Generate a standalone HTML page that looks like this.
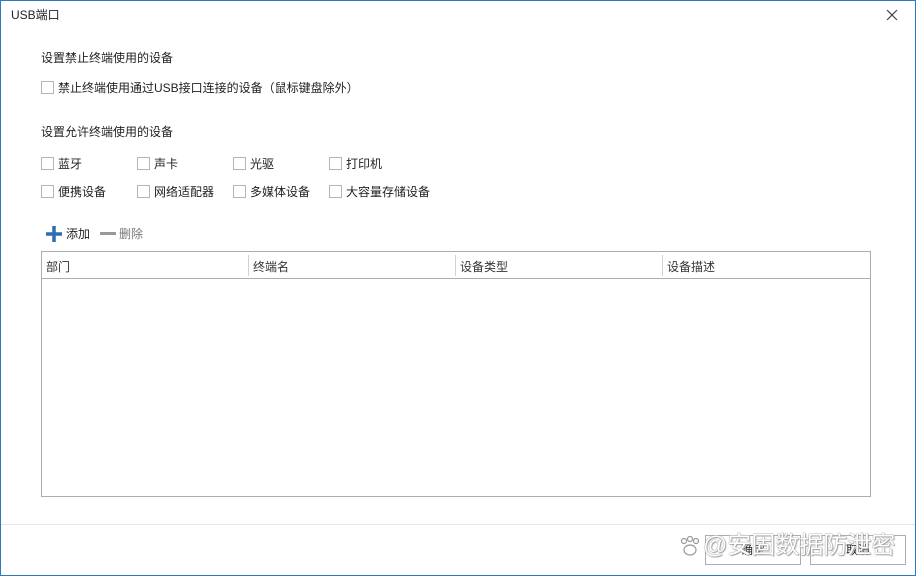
<!DOCTYPE html>
<html><head><meta charset="utf-8"><style>
*{margin:0;padding:0;box-sizing:border-box}
body{width:916px;height:576px;background:#fff;font-family:"Liberation Sans","Noto Sans CJK SC",sans-serif;font-size:12px;color:#222;position:relative;overflow:hidden}
.frame{position:absolute;inset:0;border:1px solid #2b79c2}
.a{position:absolute;white-space:nowrap;line-height:14px}
.cb{position:absolute;width:13px;height:13px;border:1px solid #b5b5b5;background:#fff}
.tbl{position:absolute;left:41px;top:251px;width:830px;height:246px;border:1px solid #adadad}
.hd{position:absolute;left:0;top:0;right:0;height:27px;border-bottom:1px solid #adadad}
.hd span{position:absolute;top:6px;color:#333}
.hd i{position:absolute;top:3px;width:1px;height:21px;background:#d0d0d0}
.btn{position:absolute;top:535px;width:96px;height:30px;border:1px solid #adadad;background:#fff;text-align:center;line-height:28px}
</style></head><body>
<div class="frame"></div>
<div class="a" style="left:11px;top:8px">USB端口</div>
<svg style="position:absolute;left:886px;top:9px" width="12" height="12"><path d="M1 1L11 11M11 1L1 11" stroke="#444" stroke-width="1.2"/></svg>
<div class="a" style="left:41px;top:51px">设置禁止终端使用的设备</div>
<div class="cb" style="left:41px;top:81px"></div><div class="a" style="left:58px;top:81px">禁止终端使用通过USB接口连接的设备（鼠标键盘除外）</div>
<div class="a" style="left:41px;top:125px">设置允许终端使用的设备</div>
<div class="cb" style="left:41px;top:157px"></div><div class="a" style="left:58px;top:157px">蓝牙</div>
<div class="cb" style="left:137px;top:157px"></div><div class="a" style="left:154px;top:157px">声卡</div>
<div class="cb" style="left:233px;top:157px"></div><div class="a" style="left:250px;top:157px">光驱</div>
<div class="cb" style="left:329px;top:157px"></div><div class="a" style="left:346px;top:157px">打印机</div>
<div class="cb" style="left:41px;top:185px"></div><div class="a" style="left:58px;top:185px">便携设备</div>
<div class="cb" style="left:137px;top:185px"></div><div class="a" style="left:154px;top:185px">网络适配器</div>
<div class="cb" style="left:233px;top:185px"></div><div class="a" style="left:250px;top:185px">多媒体设备</div>
<div class="cb" style="left:329px;top:185px"></div><div class="a" style="left:346px;top:185px">大容量存储设备</div>
<svg style="position:absolute;left:46px;top:226px" width="16" height="16"><path d="M0 8H16M8 0V16" stroke="#2d6db4" stroke-width="3.5"/></svg>
<div class="a" style="left:66px;top:227px">添加</div>
<div style="position:absolute;left:100px;top:232px;width:16px;height:3px;background:#999"></div>
<div class="a" style="left:119px;top:227px;color:#777">删除</div>
<div class="tbl"><div class="hd">
<span style="left:4px">部门</span><i style="left:206px"></i>
<span style="left:211px">终端名</span><i style="left:413px"></i>
<span style="left:418px">设备类型</span><i style="left:620px"></i>
<span style="left:625px">设备描述</span>
</div></div>
<div style="position:absolute;left:1px;right:1px;top:524px;height:1px;background:#e6e6e6"></div>
<div class="btn" style="left:705px">确定</div>
<div class="btn" style="left:810px">取消</div>
<div class="a" style="left:703px;top:532px;font-size:24px;line-height:28px;color:#fff;text-shadow:0 0 1px #888,0 0 1px #888,1px 1px 1px #aaa">@安固数据防泄密</div>
<svg style="position:absolute;left:679px;top:535px" width="22" height="22"><g fill="#fff" stroke="#999" stroke-width="1.2"><circle cx="5" cy="6" r="2.5"/><circle cx="11" cy="4" r="2.5"/><circle cx="17" cy="6" r="2.5"/><ellipse cx="11" cy="15" rx="6" ry="5"/></g></svg>
</body></html>
